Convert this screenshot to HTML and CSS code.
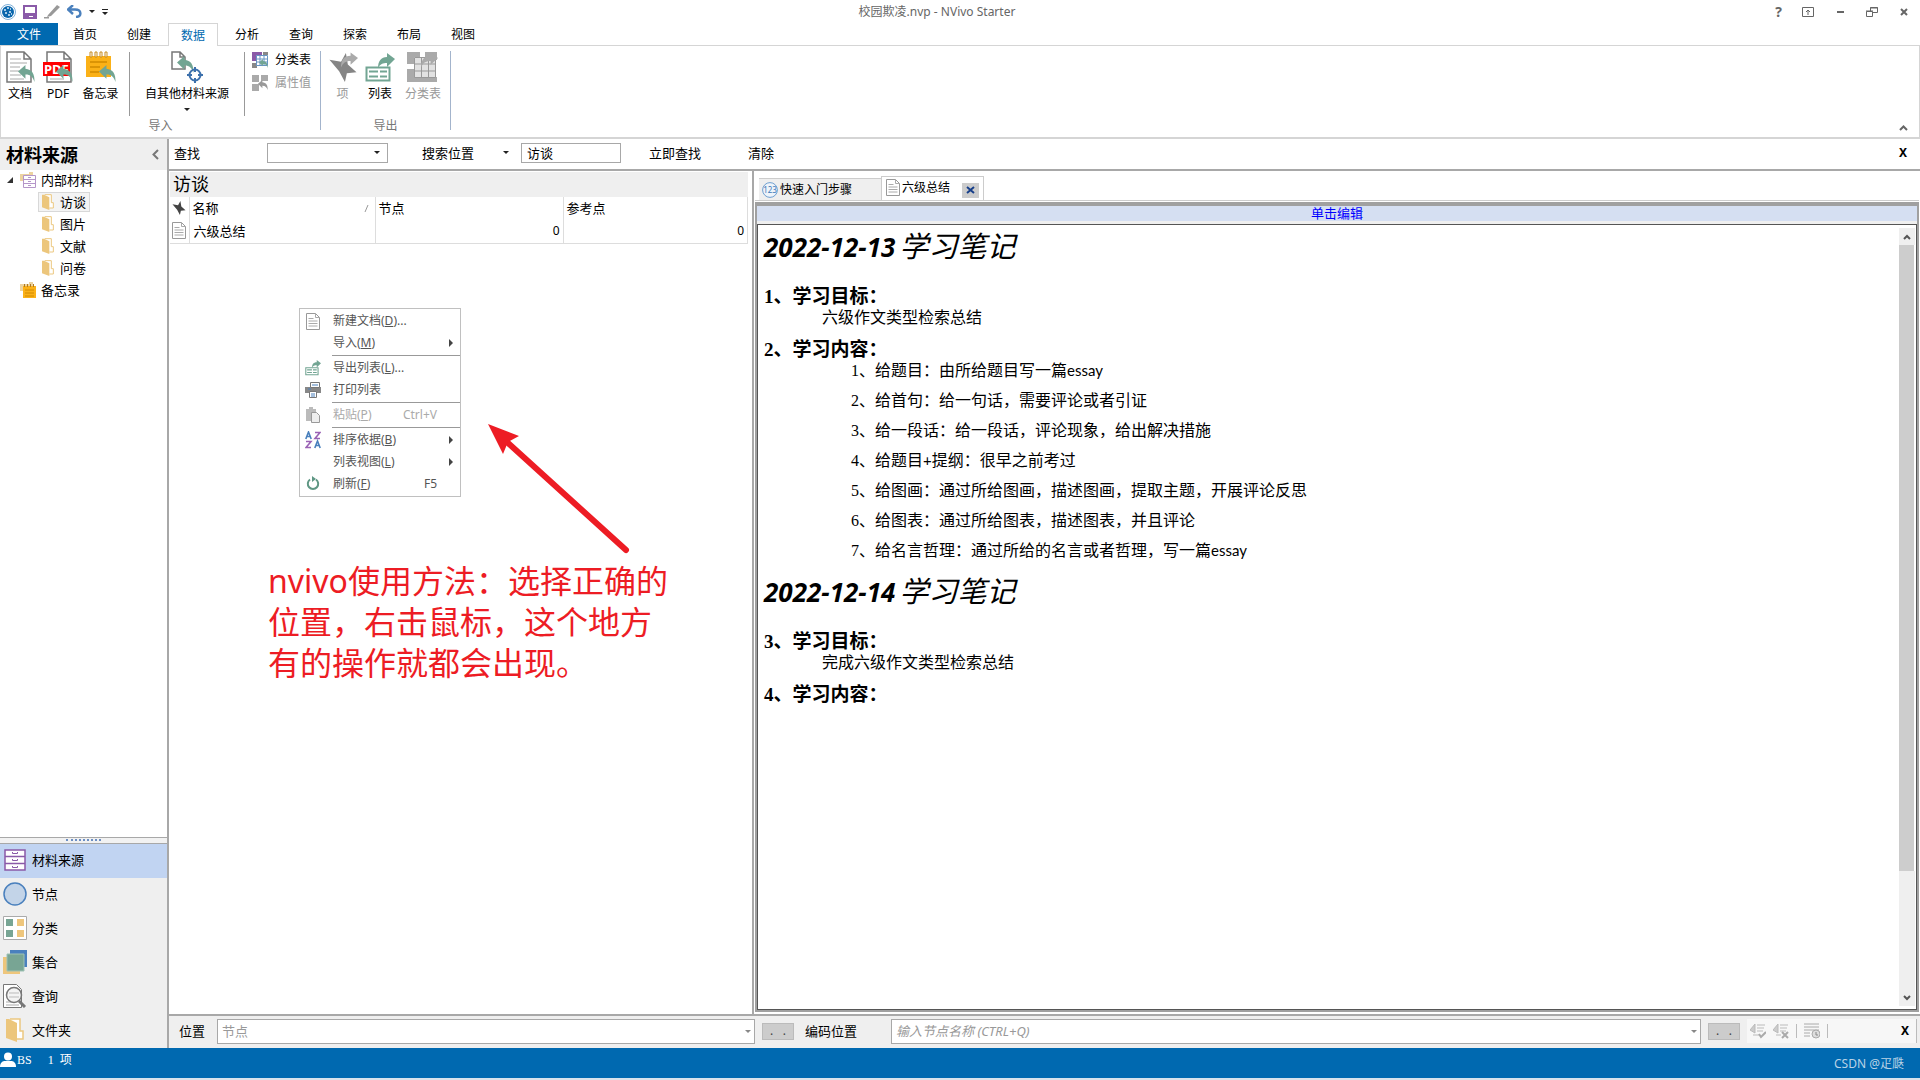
FILE: index.html
```html
<!DOCTYPE html>
<html lang="zh-CN">
<head>
<meta charset="utf-8">
<title>校园欺凌.nvp - NVivo Starter</title>
<link rel="stylesheet" href="styles.css">
</head>
<body>
<svg class="defs" width="0" height="0" aria-hidden="true">
  <defs>
    <symbol id="arrow-in" viewBox="0 0 16 16"><path d="M0 6 7 0v3.500c6 .5 9 5 8.500 12.500C14 11.500 12 9 7 9v4z"/></symbol>
    <symbol id="arrow-out" viewBox="0 0 16 14"><path d="M16 5 9 0v3C3 3 0 7 0 14c2-4 4-6 9-6v3.500z"/></symbol>
    <symbol id="folder" viewBox="0 0 18 24"><path d="M4 1h10v12h3v8h-6" fill="#fff" stroke="#ecc880" stroke-width="1.500"/><path d="M0 1h3l8 4v19L0 20z" fill="#ecc67c"/></symbol>
    <symbol id="page" viewBox="0 0 14 17"><path d="M.5.500h9l4 4v12H.5z" fill="#fff" stroke="#999"/><path d="M9.500.500v4h4M2.500 5.500h5M2.500 8h9M2.500 10.500h9M2.500 13h9" fill="none" stroke="#aaa"/></symbol>
    <symbol id="star" viewBox="0 0 28 30"><path d="M0 7 12 9 17 0l2 12 9 8-10 1-2 9-6-11z"/></symbol>
    <symbol id="cabinet" viewBox="0 0 22 22"><path d="M1 1h20v20H1zM1 7.500h20M1 14.500h20" fill="#fff" stroke="#8a5aa8" stroke-width="1.500"/><path d="M8.500 3v1.500h5V3M8.500 10v1.500h5V10M8.500 17v1.500h5V17" fill="none" stroke="#8a5aa8"/></symbol>
    <symbol id="table-export" viewBox="0 0 30 30"><path d="M1.500 14.500h23v13h-23zM4 18.500h9M15 18.500h7M4 23.500h9M15 23.500h7" fill="none" stroke="#72a593" stroke-width="2"/><path d="M30 6 22 0v4c-6 0-9 4-9 11 2-4 5-5 9-5v4z" fill="#72a593"/></symbol>
  </defs>
</svg>

<header class="titlebar">
  <div class="quick">
    <svg width="16" height="16" viewBox="0 0 16 16"><circle cx="8" cy="8" r="7.500" fill="#fff" stroke="#7fb0d8"/><circle cx="8" cy="8" r="6" fill="#0a67ad"/><path d="M4 6h2M7 4h2M10 5h1M5 9h2M9 8h2M8 11h2M11 10h1" stroke="#d6eaf8" stroke-width="1.500"/></svg>
    <button aria-label="保存"><svg width="14" height="14" viewBox="0 0 14 14"><path d="M1 1h12v12H1z" fill="#fff" stroke="#8a5aa8" stroke-width="2"/><path d="M1 8h12v5h-3v-2H6v2H1z" fill="#8a5aa8"/></svg></button>
    <button aria-label="编辑"><svg width="16" height="14" viewBox="0 0 16 14"><path d="M4 10 13 0l3 2-9 9-4 1zM0 12h5v1.500H0z" fill="#999"/></svg></button>
    <button aria-label="撤消"><svg width="15" height="13" viewBox="0 0 15 13"><path d="M6 0 1 4.500 6 9M1 4.500h7c7 0 7 7 1 7.500" fill="none" stroke="#4a80bd" stroke-width="2.400"/></svg></button>
    <i class="caret"></i>
    <button aria-label="自定义"><svg width="6" height="6" viewBox="0 0 6 6"><path d="M0 0h6v1H0zM0 3h6L3 6z" fill="#222"/></svg></button>
  </div>
  <div class="apptitle">校园欺凌.nvp - NVivo Starter</div>
  <div class="winbtns">
    <button class="help" aria-label="帮助">?</button>
    <button aria-label="功能区选项"><svg width="12" height="10" viewBox="0 0 12 10"><path d="M.5.500h11v9H.5zM6 8V3M4 5l2-2 2 2" fill="none" stroke="#666"/></svg></button>
    <button aria-label="最小化"><svg width="12" height="10" viewBox="0 0 12 10"><path d="M3 5h7" stroke="#666" stroke-width="2"/></svg></button>
    <button aria-label="还原"><svg width="12" height="10" viewBox="0 0 12 10"><path d="M.5 4.500h6v5h-6zM4.500 4V.5h7v5H7M0 4h7M4 1h8" fill="none" stroke="#666"/></svg></button>
    <button aria-label="关闭"><svg width="12" height="10" viewBox="0 0 12 10"><path d="m3 2 6 6M9 2 3 8" stroke="#666" stroke-width="2"/></svg></button>
  </div>
</header>

<nav class="tabs">
  <button class="tab file">文件</button><button class="tab">首页</button><button class="tab">创建</button><button class="tab active">数据</button><button class="tab">分析</button><button class="tab">查询</button><button class="tab">探索</button><button class="tab">布局</button><button class="tab">视图</button>
</nav>

<section class="ribbon">
  <div class="group import">
    <div class="tools">
      <button class="tool w-doc"><svg width="32" height="32" viewBox="-2 0 32 32"><path d="M1 1h17l7 7v23H1zM18 1v7h7" fill="#fff" stroke="#777" stroke-width="1.500"/><path d="M4 8h11M4 12h17M4 16h10M4 20h9M4 24h11M4 28h14" stroke="#aaa"/><use href="#arrow-in" x="12" y="14" width="17" height="17" fill="#72a593"/></svg>文档</button>
      <button class="tool w-pdf"><svg width="30" height="32" viewBox="0 0 30 32"><path d="M4 1h17l7 7v23H4zM21 1v7h7" fill="#fff" stroke="#777" stroke-width="1.500"/><path d="M7 28h14" stroke="#aaa"/><path d="M0 11h27v14H0z" fill="#f00"/><text class="pdftext" x="1" y="23">PDF</text><use href="#arrow-in" x="13" y="14" width="17" height="17" fill="#72a593"/></svg>PDF</button>
      <button class="tool w-memo"><svg width="30" height="32" viewBox="0 0 30 32"><path d="M0 5h25v21H0z" fill="#fbb117"/><path d="M4 11h17M4 16h10M4 21h9" stroke="#d18a00" stroke-width="1.500"/><path d="M4 1h2v5H4zM9 1h2v5H9zM14 1h2v5h-2zM19 1h2v5h-2z" fill="#fff" stroke="#c78b20"/><use href="#arrow-in" x="13" y="14" width="17" height="17" fill="#72a593"/></svg>备忘录</button>
    </div>
    <i class="vline"></i>
    <button class="tool w-other"><svg width="32" height="32" viewBox="0 0 32 32"><path d="M1 1h8l5 5v12H1zM9 1v5h5" fill="#fff" stroke="#777" stroke-width="1.500"/><use href="#arrow-in" x="6" y="5" width="17" height="17" fill="#72a593"/><circle cx="24" cy="24" r="5.500" fill="none" stroke="#3c70ac" stroke-width="2"/><path d="M24 16v5M24 27v5M16 24h5M27 24h5" stroke="#3c70ac" stroke-width="2"/></svg>自其他材料来源<i class="caret"></i></button>
    <i class="vline tight"></i>
    <div class="small">
      <button><svg width="16" height="16" viewBox="0 0 16 16"><path d="M0 0h10v4H4v5H0z" fill="#8a5aa8"/><path d="M11 0h5v3h-5zM0 11h5v5H0z" fill="#888"/><path d="M4.500 3.500h11v10h-11zM8 3v11M12 3v11M4 7h12M4 10h12" fill="#fff" stroke="#6794c4"/><use href="#arrow-in" x="7" y="7" width="9" height="9" fill="#72a593"/></svg>分类表</button>
      <button disabled><svg width="16" height="16" viewBox="0 0 16 16"><path d="M0 0h7v7H0zM9 0h7v6H9zM0 9h7v7H0z" fill="#aaa"/><use href="#arrow-in" x="6" y="5" width="10" height="10" fill="#999"/></svg>属性值</button>
    </div>
    <span class="caption cap-in">导入</span>
  </div>
  <div class="group export">
    <div class="tools">
      <button class="tool w-item" disabled><svg width="30" height="32" viewBox="0 0 30 32"><use href="#star" x="0" y="2" width="30" height="29" fill="#858585"/><use href="#arrow-out" x="13" y="1" width="17" height="16" fill="#aaa"/></svg>项</button>
      <button class="tool w-list"><svg width="30" height="32" viewBox="0 0 30 32"><use href="#table-export" x="0" y="2" width="30" height="30"/></svg>列表</button>
      <button class="tool w-class" disabled><svg width="32" height="32" viewBox="0 0 32 32"><path d="M0 1h13v5H7v7H0zM18 1h12v8H18zM0 18h7v13H0zM7 26h23v5H7z" fill="#aaa"/><path d="M7.500 6.500h21v20h-21zM14.500 6v21M21.500 6v21M7 13h22M7 20h22" fill="#e2e2e2" stroke="#999"/><use href="#arrow-out" x="14" y="1" width="17" height="16" fill="#aaa"/></svg>分类表</button>
    </div>
    <span class="caption">导出</span>
  </div>
  <button class="collapse" aria-label="折叠功能区"><svg width="9" height="6" viewBox="0 0 9 6"><path d="m1 5 3.500-3.500L8 5" fill="none" stroke="#666" stroke-width="2"/></svg></button>
</section>

<main class="workspace">
  <aside class="sidebar">
    <h1>材料来源<button aria-label="折叠"><svg width="7" height="11" viewBox="0 0 7 11"><path d="M6 1 1.500 5.500 6 10" fill="none" stroke="#777" stroke-width="2"/></svg></button></h1>
    <ul class="tree">
      <li class="root"><svg class="twist" width="6" height="6" viewBox="0 0 6 6"><path d="M6 0v6H0z" fill="#333"/></svg><svg width="16" height="16" viewBox="0 0 16 16"><path d="M0 2h9V0h4v9H0z" fill="#ecd3a0"/><path d="M3.500 3.500h12v12h-12zM3 7.500h13M3 11.500h13" fill="#fff" stroke="#b596c9"/><path d="M8 5.500h3M8 9.500h3M8 13.500h3" stroke="#b596c9"/></svg>内部材料</li>
      <li class="child sel"><span><svg width="12" height="16"><use href="#folder"/></svg>访谈</span></li>
      <li class="child"><span><svg width="12" height="16"><use href="#folder"/></svg>图片</span></li>
      <li class="child"><span><svg width="12" height="16"><use href="#folder"/></svg>文献</span></li>
      <li class="child"><span><svg width="12" height="16"><use href="#folder"/></svg>问卷</span></li>
      <li class="root memo"><svg width="16" height="16" viewBox="0 0 16 16"><path d="M0 2h9V0h4v9H0z" fill="#ecd3a0"/><path d="M3 4h13v12H3z" fill="#fbb117"/><path d="M5 8h9M5 11h9M5 14h9" stroke="#d18a00"/><path d="M4.500 2v3M7.500 2v3M10.500 2v3M13.500 2v3" stroke="#b07a20"/></svg>备忘录</li>
    </ul>
    <div class="grip"><i></i></div>
    <nav class="areas">
      <button class="on"><svg width="24" height="24"><use href="#cabinet" x="1" y="1" width="22" height="22"/></svg>材料来源</button>
      <button><svg width="24" height="24"><circle cx="12" cy="12" r="11" fill="#c3d4e8" stroke="#4a80bd" stroke-width="1.500"/></svg>节点</button>
      <button><svg width="24" height="24"><path d="M.5.500h23v23H.5z" fill="#fff" stroke="#aaa"/><path d="M3 3h7v7H3zM3 14h7v7H3z" fill="#78a594"/><path d="M14 3h7v7h-7zM14 14h7v7h-7z" fill="#eec67c"/></svg>分类</button>
      <button><svg width="24" height="24"><path d="M0 7h17v17H0z" fill="#eec67c"/><path d="M7 0h17v17H7z" fill="#4a80bd"/><path d="M4 4h17v17H4z" fill="#78a594" stroke="#9ec2b4"/></svg>集合</button>
      <button><svg width="24" height="24"><path d="M.5.500h13l5 5v18H.5z" fill="#fff" stroke="#777"/><path d="M3 18h9M3 21h13" stroke="#aaa"/><circle cx="11" cy="11" r="7.500" fill="#f4f4f4" stroke="#777" stroke-width="1.500"/><path d="M6 9h10M6 13h10" stroke="#bbb"/><path d="m16 17 6 6" stroke="#777" stroke-width="3"/></svg>查询</button>
      <button><svg width="24" height="24"><use href="#folder" x="3" y="0" width="18" height="24"/></svg>文件夹</button>
    </nav>
  </aside>

  <div class="content">
    <form class="findbar">
      <label class="f-find" for="find">查找</label>
      <div class="combo f-combo"><input id="find" type="text"><i class="caret"></i></div>
      <button type="button" class="f-where">搜索位置<i class="caret"></i></button>
      <input class="f-scope" type="text" value="访谈" aria-label="搜索范围">
      <button type="button" class="f-go">立即查找</button>
      <button type="button">清除</button>
      <button type="button" class="x" aria-label="关闭查找">X</button>
    </form>

    <div class="split">
      <section class="list">
        <h2>访谈</h2>
        <table>
          <colgroup><col class="c-icon"><col class="c-name"><col class="c-node"><col class="c-ref"></colgroup>
          <thead><tr><th><svg width="14" height="14"><use href="#star" fill="#444"/></svg></th><th><div class="sort">名称<svg width="5" height="7" viewBox="0 0 5 7"><path d="M1 7 4 0" stroke="#999"/></svg></div></th><th>节点</th><th>参考点</th></tr></thead>
          <tbody><tr><td><svg width="14" height="17"><use href="#page"/></svg></td><td>六级总结</td><td class="num">0</td><td class="num">0</td></tr></tbody>
        </table>

        <div class="menu" role="menu">
          <button role="menuitem"><svg width="16" height="17"><use href="#page" x="1" width="14" height="17"/></svg><span>新建文档(<u>D</u>)...</span></button>
          <button role="menuitem"><i class="noicon"></i><span>导入(<u>M</u>)</span><b class="sub"></b></button>
          <hr>
          <button role="menuitem"><svg width="16" height="16"><use href="#table-export"/></svg><span>导出列表(<u>L</u>)...</span></button>
          <button role="menuitem"><svg width="16" height="16" viewBox="0 0 16 16"><path d="M0 5h16v6H0z" fill="#888"/><path d="M5.500.500h9v5h-9zM4.500 9.500h7v6h-7z" fill="#fff" stroke="#777"/><path d="M7 3h6M6 12h4M6 14h4M3 7h3" stroke="#4a80bd"/></svg><span>打印列表</span></button>
          <hr>
          <button role="menuitem" disabled><svg width="16" height="16" viewBox="0 0 16 16"><path d="M1 2h3V0h4v2h3v12H1z" fill="#bbb"/><path d="M6.500 5.500h5l3 3v7h-8z" fill="#eee" stroke="#999"/></svg><span>粘贴(<u>P</u>)</span><kbd>Ctrl+V</kbd></button>
          <hr>
          <button role="menuitem"><svg width="16" height="18" viewBox="0 0 16 18"><g fill="none" stroke-width="1.600"><path d="m.8 8 2.700-7L6.200 8M1.500 5.500h4M9.800 17l2.700-7 2.700 7M10.500 14.500h4" stroke="#4a80bd"/><path d="M10 1.500h5l-5 6h5M1 10.500h5l-5 6h5" stroke="#9a62b5"/></g></svg><span>排序依据(<u>B</u>)</span><b class="sub"></b></button>
          <button role="menuitem"><i class="noicon"></i><span>列表视图(<u>L</u>)</span><b class="sub"></b></button>
          <button role="menuitem"><svg width="16" height="16" viewBox="0 0 16 16"><path d="M5 3.500A5.200 5.200 0 1 0 11 3.500" fill="none" stroke="#5f9784" stroke-width="2"/><path d="M7 0v6l4-3z" fill="#5f9784"/></svg><span>刷新(<u>F</u>)</span><kbd>F5</kbd></button>
        </div>
        <svg class="pointer" width="144" height="132" viewBox="0 0 144 132"><path d="m20 19 118 107" stroke="#ed1c24" stroke-width="6" stroke-linecap="round"/><path d="m0 0 31 12-11 6-5 12z" fill="#ed1c24"/></svg>
        <p class="note">nvivo使用方法：选择正确的<br>位置，右击鼠标，这个地方<br>有的操作就都会出现。</p>
      </section>

      <section class="detail">
        <div class="doctabs">
          <button class="dtab"><svg width="16" height="16"><circle cx="8" cy="8" r="7.400" fill="#eef4fa" stroke="#6f9fd0"/><text x="8" y="11" class="t123">123</text></svg>快速入门步骤</button>
          <div class="dtab open"><svg width="14" height="17"><use href="#page"/></svg>六级总结<button aria-label="关闭标签"><svg width="9" height="8" viewBox="0 0 9 8"><path d="m1 1 7 6M8 1 1 7" stroke="#173f8a" stroke-width="2"/></svg></button></div>
        </div>
        <div class="frame">
          <a class="editbar" href="#doc">单击编辑</a>
          <div class="viewer">
            <article id="doc">
              <h3><b>2022-12-13</b>学习笔记</h3>
              <h4>1、学习目标：</h4>
              <p>六级作文类型检索总结</p>
              <h4>2、学习内容：</h4>
              <ol>
                <li>1、给题目：由所给题目写一篇<span>essay</span></li>
                <li>2、给首句：给一句话，需要评论或者引证</li>
                <li>3、给一段话：给一段话，评论现象，给出解决措施</li>
                <li>4、给题目<span>+</span>提纲：很早之前考过</li>
                <li>5、给图画：通过所给图画，描述图画，提取主题，开展评论反思</li>
                <li>6、给图表：通过所给图表，描述图表，并且评论</li>
                <li>7、给名言哲理：通过所给的名言或者哲理，写一篇<span>essay</span></li>
              </ol>
              <h3><b>2022-12-14</b>学习笔记</h3>
              <h4>3、学习目标：</h4>
              <p>完成六级作文类型检索总结</p>
              <h4>4、学习内容：</h4>
            </article>
            <div class="scroll">
              <button aria-label="向上"><svg width="8" height="6" viewBox="0 0 8 6"><path d="m1 5 3-3 3 3" fill="none" stroke="#555" stroke-width="2"/></svg></button>
              <i class="thumb"></i><i class="rest"></i>
              <button aria-label="向下"><svg width="8" height="6" viewBox="0 0 8 6"><path d="m1 1 3 3 3-3" fill="none" stroke="#555" stroke-width="2"/></svg></button>
            </div>
          </div>
        </div>
      </section>
    </div>

    <form class="codebar">
      <label class="l-in" for="place">位置</label>
      <div class="combo place"><input id="place" type="text" placeholder="节点"><i class="caret"></i></div>
      <button type="button" class="dots" aria-label="选择位置">. &nbsp; .</button>
      <label class="l-at" for="code">编码位置</label>
      <div class="combo code"><input id="code" type="text" placeholder="输入节点名称 (CTRL+Q)"><i class="caret"></i></div>
      <button type="button" class="dots" aria-label="选择编码">. &nbsp; .</button>
      <div class="codetools">
        <button type="button" aria-label="编码"><svg width="16" height="16" viewBox="0 0 16 16"><path d="M5 1v9L0 7zM7 2h8M7 5h7M7 8h6M3 12h6" fill="#ccc" stroke="#bbb"/><path d="m9 11 2 3 5-5" fill="none" stroke="#aaa" stroke-width="2"/></svg></button>
        <button type="button" aria-label="取消编码"><svg width="16" height="16" viewBox="0 0 16 16"><path d="M5 1v9L0 7zM7 2h8M7 5h7M7 8h6M3 12h5" fill="#ccc" stroke="#bbb"/><path d="m9 9 6 6M15 9l-6 6" stroke="#aaa" stroke-width="2"/></svg></button>
        <i class="sep"></i>
        <button type="button" aria-label="最近节点"><svg width="16" height="16" viewBox="0 0 16 16"><path d="M0 1h15M0 4h15M0 7h15M0 10h6M0 13h6" stroke="#aaa"/><circle cx="12" cy="11" r="4" fill="#ddd" stroke="#aaa"/><path d="M12 9v3h2" fill="none" stroke="#888"/></svg></button>
        <i class="sep"></i>
        <button type="button" class="x" aria-label="关闭编码栏">X</button>
      </div>
    </form>
  </div>
</main>

<footer class="status">
  <svg width="16" height="16" viewBox="0 0 16 16"><circle cx="8" cy="4.500" r="4" fill="#fff"/><path d="M0 15c0-5 3-6 5-6h6c2 0 5 1 5 6z" fill="#fff"/></svg>
  <span class="user">BS</span><span>1&nbsp; 项</span>
  <span class="mark">CSDN @疋瓞</span>
</footer>
</body>
</html>
```
FILE: styles.css
```css
* { box-sizing: border-box; }
body {
  margin: 0;
  min-height: 100vh;
  display: flex;
  flex-direction: column;
  background: #fff;
  color: #000;
  font: 13px/22px "Noto Sans", "Noto Sans CJK SC", sans-serif;
  border-bottom: 2px solid #d9e3ec;
}
button, input { font: inherit; color: inherit; margin: 0; padding: 0; border: 0; background: none; }
button { display: inline-flex; align-items: center; }
button:disabled { color: #999; }
svg { flex: none; display: block; }
h1, h2, h3, h4, p, ul, ol { margin: 0; padding: 0; list-style: none; }
.defs { position: absolute; }
.caret { flex: none; width: 0; border: 3px solid transparent; border-top-color: #222; border-bottom: 0; }

.titlebar { display: flex; align-items: center; height: 23px; font-size: 12px; }
.quick { display: flex; align-items: center; gap: 7px; width: 200px; }
.apptitle { flex: 1; text-align: center; color: #666; padding-right: 6px; }
.winbtns { display: flex; gap: 20px; width: 240px; padding-right: 10px; justify-content: flex-end; }
.winbtns .help { color: #666; font-weight: bold; font-size: 14px; }

.tabs { display: flex; height: 22px; font-size: 12px; position: relative; }
.tab { width: 54px; justify-content: center; padding-top: 2px; }
.tab.file { width: 58px; background: #0069b0; color: #fff; }
.tab.active { height: 23px; border: 1px solid #d5d5d5; border-bottom: 0; background: #fff; color: #0069b0; width: 50px; margin: 0 2px; }

.ribbon { display: flex; height: 94px; border: 1px solid #d5d5d5; border-bottom-width: 2px; font-size: 12px; line-height: 18px; }
.group { position: relative; display: flex; align-items: flex-start; margin: 5px 0 7px; border-right: 1px solid #a3b4cc; }
.tools { display: flex; }
.tool { flex-direction: column; gap: 2px; }
.tool .caret { margin-top: 3px; }
.w-doc { width: 38px; } .w-pdf { width: 38px; } .w-memo { width: 47px; }
.w-other { width: 114px; }
.w-item { width: 43px; } .w-list { width: 32px; } .w-class { width: 54px; }
.vline { width: 1px; height: 64px; background: #999; margin: 1px 0 0 5px; }
.vline.tight { margin-left: 0; }
.small { display: flex; flex-direction: column; gap: 5px; padding: 0 9px 0 7px; }
.small button { gap: 7px; }
.caption { position: absolute; bottom: -5px; left: 0; right: 0; text-align: center; color: #777; }
.pdftext { font: bold 13px "Noto Sans", sans-serif; fill: #fff; }
.collapse { margin: auto 11px 6px auto; }

.workspace { flex: 1; display: flex; min-height: 0; }
.sidebar { width: 169px; flex: none; display: flex; flex-direction: column; border-right: 2px solid #a8a8a8; }
.sidebar h1 { display: flex; align-items: center; justify-content: space-between; height: 31px; padding: 0 8px 0 6px; background: #efefef; font-size: 18px; }
.tree { flex: 1; }
.tree li { display: flex; align-items: center; height: 22px; gap: 5px; padding-bottom: 2px; }
.root { padding-left: 7px; }
.root .twist { margin-right: 2px; }
.root.memo { padding-left: 20px; }
.child { padding-left: 38px; }
.child span { display: flex; align-items: center; height: 20px; gap: 6px; padding: 0 3px; border: 1px solid transparent; }
.child.sel span { border-color: #d8d8d8; background: #f4f4f4; }
.grip { height: 7px; border: solid #a8a8a8; border-width: 1px 0; background: #f2f2f2; }
.grip i { display: block; width: 35px; margin: 1px auto; border-top: 2px dotted #6c8fc4; }
.areas { display: flex; flex-direction: column; background: #efefef; }
.areas button { height: 34px; padding: 0 0 2px 3px; gap: 5px; }
.areas .on { background: #c1d4f2; }

.content { flex: 1; min-width: 0; display: flex; flex-direction: column; }
.findbar { display: flex; align-items: center; height: 32px; padding: 0 13px 3px 5px; border-bottom: 2px solid #a8a8a8; }
.f-find { width: 93px; }
.combo { display: flex; align-items: center; border: 1px solid #a8a8a8; background: #fff; padding: 0 7px 0 4px; }
.combo input { flex: 1; min-width: 0; outline: 0; }
.f-combo { width: 121px; height: 20px; }
.f-where { margin-left: 34px; gap: 29px; }
.f-scope { width: 100px; height: 20px; margin-left: 12px; padding-left: 5px; border: 1px solid #a8a8a8; }
.f-go { margin: 0 47px 0 28px; }
.x { font-weight: bold; font-size: 12px; }
.findbar .x { margin-left: auto; }

.split { flex: 1; display: flex; min-height: 0; border-bottom: 2px solid #a8a8a8; }
.list { position: relative; flex: none; width: 585px; border-right: 2px solid #a8a8a8; padding: 1px 4px 0 1px; }
.list h2 { height: 25px; padding-left: 3px; background: #efefef; font: 18px/25px "Noto Sans", "Noto Sans CJK SC", sans-serif; }
table { width: 100%; border-collapse: collapse; table-layout: fixed; }
.c-icon { width: 19px; } .c-name { width: 186px; } .c-node { width: 188px; }
th, td { height: 22px; padding: 0 3px; font-weight: normal; text-align: left; border-right: 1px solid #ddd; line-height: 20px; }
td { height: 24px; border-bottom: 1px solid #ddd; padding-left: 4px; }
th:first-child, td:first-child { padding: 0 2px; }
.sort { display: flex; align-items: center; justify-content: space-between; padding-right: 3px; }
td.num { text-align: right; font-size: 12px; }

.menu { position: absolute; left: 130px; top: 137px; width: 162px; padding: 1px 0; border: 1px solid #c0c0c0; background: #fff; color: #555; font-size: 12px; }
.menu button { display: flex; width: 100%; height: 22px; padding: 0 7px 0 5px; gap: 12px; }
.menu button:disabled { color: #aaa; }
.noicon { width: 16px; }
.menu hr { margin: 1px 0 1px 32px; border: 0; border-top: 1px solid #999; }
.sub { margin-left: auto; border: 4px solid transparent; border-left-color: #444; border-right: 0; }
.menu kbd { font: inherit; margin-left: auto; margin-right: 16px; }
.pointer { position: absolute; left: 319px; top: 253px; }
.note { position: absolute; left: 99px; top: 389px; color: #ed1c24; font-size: 32px; line-height: 41px; white-space: nowrap; }

.detail { flex: 1; min-width: 0; display: flex; flex-direction: column; padding: 2px 1px 2px 1px; }
.doctabs { display: flex; align-items: flex-end; height: 28px; padding-left: 4px; border-bottom: 1px solid #ccc; font-size: 12px; }
.dtab { display: flex; align-items: center; height: 22px; width: 122px; padding-left: 3px; gap: 2px; background: #efefef; border-top: 1px solid #ccc; }
.dtab.open { height: 24px; width: 103px; padding: 0 4px 2px; gap: 2px; background: #fff; border: 1px solid #ccc; border-bottom: 0; }
.dtab.open button { width: 17px; height: 15px; margin: 5px 0 0 auto; justify-content: center; background: #ccc; }
.t123 { font: 8px "Noto Sans", sans-serif; text-anchor: middle; fill: #3f79b8; }
.frame { flex: 1; display: flex; flex-direction: column; margin-top: 1px; border: 2px solid #a0a0a0; border-top-width: 4px; background: #efefef; min-height: 0; }
.editbar { height: 15px; background: #d5dff2; color: #00f; text-align: center; font-size: 13px; line-height: 15px; text-decoration: none; margin-bottom: 3px; }
.viewer { flex: 1; display: flex; border: 1px solid #555; background: #fff; min-height: 0; }
article { flex: 1; padding-left: 6px; font: 16px/21px "Liberation Serif", "Noto Sans CJK SC", serif; }
article h3 { height: 61px; font: italic 29px/42px "Noto Sans", "Noto Sans CJK SC", sans-serif; }
article h3 b { font-size: 26px; margin-right: 4px; }
article h4 { font-size: 19px; line-height: 21px; }
article p { padding-left: 58px; margin-bottom: 11px; }
article ol { padding-left: 87px; margin-bottom: 1px; }
article li { line-height: 21px; margin-bottom: 9px; }
article li span { font-family: "Lato", sans-serif; font-size: 15px; }
.scroll { width: 17px; padding: 3px 1px 3px 0; display: flex; flex-direction: column; }
.scroll button { height: 17px; justify-content: center; background: #efefef; }
.thumb { flex: 627; background: #cdcdcd; margin-right: 1px; }
.rest { flex: 118; background: #efefef; }

.codebar { display: flex; align-items: center; height: 32px; padding: 0 3px 2px 10px; background: #efefef; }
.l-in { width: 38px; }
.codebar .combo { height: 25px; padding-right: 3px; }
.codebar .caret { border-top-color: #888; }
.place { width: 538px; }
.code { flex: 1; font-style: italic; }
.combo input::placeholder { color: #999; }
.dots { width: 32px; height: 17px; margin: 0 7px; justify-content: center; border: 1px solid #bbb; background: #ccc; color: #444; font-size: 12px; }
.place + .dots { margin-right: 11px; }
.l-at { width: 86px; }
.codetools { display: flex; align-items: center; gap: 7px; width: 170px; height: 24px; padding: 0 7px 0 3px; background: #f7f7f7; border-right: 1px solid #bbb; }
.codetools .x { margin-left: auto; }
.sep { width: 1px; height: 14px; background: #bbb; }

.status { display: flex; align-items: flex-start; height: 30px; padding: 4px 16px 0 0; background: #0069b0; color: #fff; font: 12px/16px "Liberation Serif", "Noto Sans CJK SC", serif; }
.user { margin: 0 16px 0 1px; }
.mark { margin: 4px 0 0 auto; color: #b9d3e6; font-family: "Noto Sans", "Noto Sans CJK SC", sans-serif; }
```
